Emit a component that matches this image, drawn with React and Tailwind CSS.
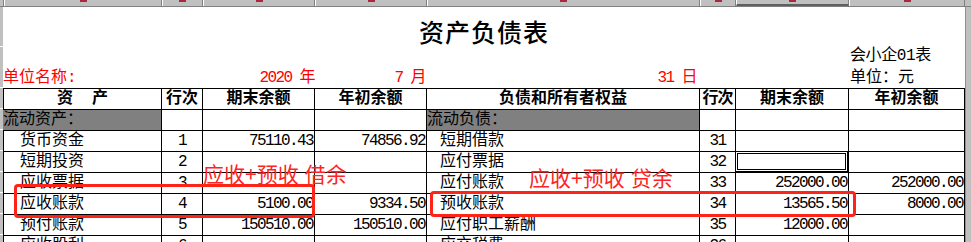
import React from "react";

const GRID = "grid grid-cols-[158px_41px_112px_112px_273px_36px_113px_116px]";

const rows = [
  { l: "货币资金", n: "1", a: "75110.43", b: "74856.92", r: "短期借款", rn: "31", c: "", d: "" },
  { l: "短期投资", n: "2", a: "", b: "", r: "应付票据", rn: "32", c: "", d: "", sel: true },
  { l: "应收票据", n: "3", a: "", b: "", r: "应付账款", rn: "33", c: "252000.00", d: "252000.00" },
  { l: "应收账款", n: "4", a: "5100.00", b: "9334.50", r: "预收账款", rn: "34", c: "13565.50", d: "8000.00" },
  { l: "预付账款", n: "5", a: "150510.00", b: "150510.00", r: "应付职工薪酬", rn: "35", c: "12000.00", d: "" },
  { l: "应收股利", n: "6", a: "", b: "", r: "应交税费", rn: "36", c: "", d: "" },
];

function Cell({ children, className = "" }) {
  return (
    <div className={`relative h-[21px] border-r border-b border-black leading-[20px] whitespace-nowrap overflow-hidden ${className}`}>
      {children}
    </div>
  );
}

function NumCell({ v }) {
  return <Cell className="text-right pr-[1px] tracking-[-1.6px]">{v}</Cell>;
}

function TopStrip() {
  const widths = ["w-[158px]", "w-[41px]", "w-[112px]", "w-[112px]", "w-[273px]", "w-[36px]", "w-[113px]", "w-[116px]"];
  return (
    <div className="flex h-[7px] bg-[#c0c0c0] border-b border-[#808080] shrink-0">
      <div className="w-[4px] border-r border-[#808080]" />
      {widths.map((w, i) => (
        <div
          key={i}
          className={`${w} flex justify-center border-r border-[#808080] border-l border-l-white ${i === 6 ? "border-b-2 border-b-[#606060]" : ""}`}
        >
          <div className="w-[7px] h-[2px] bg-[#a8283c]" />
        </div>
      ))}
      <div className="flex-1" />
    </div>
  );
}

function LeftStrip() {
  return (
    <div className="w-[3px] flex flex-col bg-[#c0c0c0]">
      <div className="h-[40px] border-b border-white" />
      <div className="h-[41px] border-b border-white" />
      {Array.from({ length: 8 }).map((_, i) => (
        <div key={i} className="h-[21px] border-b border-white" />
      ))}
    </div>
  );
}

export default function App() {
  return (
    <div className="relative w-[971px] h-[242px] overflow-hidden bg-white flex flex-col text-black text-[16px] font-[family-name:'Liberation_Mono','Noto_Sans_CJK_SC',monospace]">
      <TopStrip />
      <div className="flex flex-1">
        <LeftStrip />
        <div className="w-[962px] flex flex-col">
          {/* Title */}
          <div className="h-[39px] pt-[12px] text-center">
            <span className="text-[25px] leading-[25px] font-medium tracking-[1px] font-[family-name:'Noto_Sans_CJK_SC',sans-serif]">
              资产负债表
            </span>
          </div>
          {/* meta row 1 */}
          <div className={`${GRID} pl-[1px] h-[21px] leading-[21px]`}>
            <div className="col-start-8 pl-[1px] tracking-[-0.4px] whitespace-nowrap">会小企01表</div>
          </div>
          {/* meta row 2 */}
          <div className={`${GRID} pl-[1px] h-[21px] leading-[22px] text-[#ff0000]`}>
            <div className="-ml-[1px] whitespace-nowrap">单位名称:</div>
            <div />
            <div className="text-right pr-[1px] tracking-[-1.6px] whitespace-nowrap">2020 年</div>
            <div className="text-right pr-[2px] tracking-[-1.6px] whitespace-nowrap">7 月</div>
            <div className="text-right pr-[4px] tracking-[-1.6px] whitespace-nowrap">31 日</div>
            <div />
            <div />
            <div className="pl-[1px] text-black whitespace-nowrap">单位：元</div>
          </div>
          {/* table */}
          <div className={`${GRID} border-l border-t border-black`}>
            {/* header */}
            <Cell className="text-center font-bold">
              资<span className="inline-block w-[19px]" />产
            </Cell>
            <Cell className="text-center font-bold">行次</Cell>
            <Cell className="text-center font-bold">期末余额</Cell>
            <Cell className="text-center font-bold">年初余额</Cell>
            <Cell className="text-center font-bold">负债和所有者权益</Cell>
            <Cell className="text-center font-bold tracking-[-1px]">行次</Cell>
            <Cell className="text-center font-bold">期末余额</Cell>
            <Cell className="text-center font-bold">年初余额</Cell>
            {/* section row */}
            <Cell className="bg-[#808080] -ml-[1px] pl-0">流动资产：</Cell>
            <Cell />
            <Cell />
            <Cell />
            <Cell className="bg-[#808080]">流动负债：</Cell>
            <Cell />
            <Cell />
            <Cell />
            {rows.map((r, i) => (
              <React.Fragment key={i}>
                <Cell className="pl-[16px]">{r.l}</Cell>
                <Cell className="text-center tracking-[-1.6px]">{r.n}</Cell>
                <NumCell v={r.a} />
                <NumCell v={r.b} />
                <Cell className="pl-[13px]">{r.r}</Cell>
                <Cell className="text-center tracking-[-1.6px]">{r.rn}</Cell>
                {r.sel ? (
                  <div className="relative h-[21px] border-r border-b border-black">
                    <div className="absolute -top-px -left-px right-0 bottom-0 border-[3px] border-double border-black" />
                  </div>
                ) : (
                  <NumCell v={r.c} />
                )}
                <NumCell v={r.d} />
              </React.Fragment>
            ))}
          </div>
        </div>
        <div className="flex-1 bg-[#c0c0c0] border-l border-[#909090]" />
      </div>

      {/* annotations */}
      <div className="absolute left-[203px] top-[161px] text-[21px] leading-[24px] text-[#ff2424] whitespace-nowrap font-[family-name:'Noto_Sans_CJK_SC',sans-serif]">
        应收+预收<span className="inline-block w-[6px]" />借余
      </div>
      <div className="absolute left-[529px] top-[165px] text-[21px] leading-[24px] text-[#ff2424] whitespace-nowrap font-[family-name:'Noto_Sans_CJK_SC',sans-serif]">
        应收+预收<span className="inline-block w-[6px]" />贷余
      </div>
      <div className="absolute left-[14px] top-[184px] w-[301px] h-[34px] border-[3px] border-[#ff2418] rounded-[4px]" />
      <div className="absolute left-[430px] top-[191px] w-[426px] h-[26px] border-[3px] border-[#ff2418] rounded-[4px]" />
    </div>
  );
}
